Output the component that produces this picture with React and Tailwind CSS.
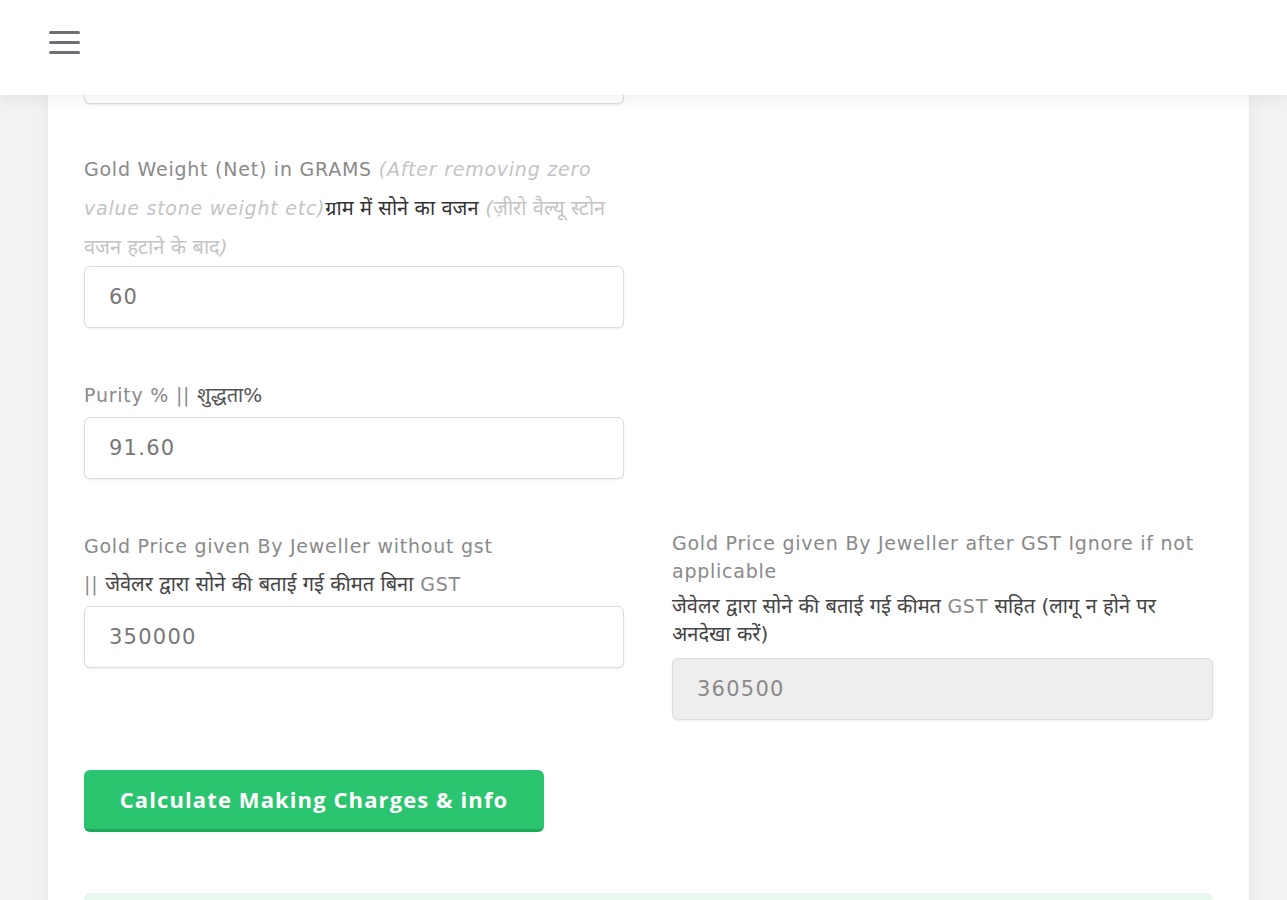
import React from 'react';

const font = { fontFamily: '"DejaVu Sans", "Noto Sans", "Noto Sans Devanagari", "Lohit Devanagari", sans-serif' };

const Field = ({ value, disabled }) => (
  <input
    className={
      disabled
        ? 'w-full h-[62px] px-6 border border-[#dcdcdc] rounded-md bg-[#eeeeee] text-[21px] text-[#8a8a8a] tracking-[0.06em] shadow-[0_1px_2px_rgba(0,0,0,0.08)] outline-none'
        : 'w-full h-[62px] px-6 border border-[#dcdcdc] rounded-md bg-white text-[21px] text-[#777] tracking-[0.06em] shadow-[0_1px_2px_rgba(0,0,0,0.08)] outline-none'
    }
    type="text"
    defaultValue={value}
    readOnly
    disabled={disabled}
  />
);

const App = () => {
  return (
    <div className="min-h-screen bg-[#f2f2f2] overflow-hidden" style={font}>
      {/* top bar */}
      <header className="relative z-10 h-[95px] bg-white flex items-start pt-[31px] pl-[49px] shadow-[0_6px_14px_rgba(0,0,0,0.05)]">
        <button className="flex flex-col gap-[7px]" aria-label="menu">
          <span className="block w-[31px] h-[3px] bg-[#6e6e76] rounded-sm"></span>
          <span className="block w-[31px] h-[3px] bg-[#6e6e76] rounded-sm"></span>
          <span className="block w-[31px] h-[3px] bg-[#6e6e76] rounded-sm"></span>
        </button>
      </header>

      <main className="ml-[48px] w-[1201px] bg-white min-h-[805px] px-[36px] shadow-[0_0_16px_rgba(0,0,0,0.06)]">
        {/* previous input, scrolled under the header */}
        <div className="w-[540px] h-[9px] border-x border-b border-[#dcdcdc] rounded-b-md shadow-[0_1px_2px_rgba(0,0,0,0.08)]"></div>

        <div className="grid grid-cols-[540px_541px] gap-x-[48px] pt-[46px]">
          <div className="flex flex-col">
            <label className="block text-[19px] leading-[39px] text-[#8a8a8a] tracking-[0.04em]">
              Gold Weight (Net) in GRAMS{' '}
              <i className="text-[#c4c4c4]">(After removing zero value stone weight etc)</i>
              <span className="text-[#333] text-[20px] tracking-normal">ग्राम में सोने का वजन</span>{' '}
              <i className="text-[#c4c4c4] text-[20px] tracking-normal">(ज़ीरो वैल्यू स्टोन वजन हटाने के बाद)</i>
            </label>
            <div className="mt-[-1px]">
              <Field value="60" />
            </div>

            <label className="block mt-[49px] text-[19px] leading-[36px] text-[#8a8a8a] tracking-[0.04em]">
              Purity % || <span className="text-[#555] text-[20px] tracking-normal">शुद्धता%</span>
            </label>
            <div className="mt-[4px]">
              <Field value="91.60" />
            </div>

            <label className="block mt-[52px] text-[19px] leading-[30px] text-[#8a8a8a] tracking-[0.04em]">
              Gold Price given By Jeweller without gst
            </label>
            <label className="block mt-[8px] text-[19px] leading-[30px] text-[#8a8a8a] tracking-[0.04em]">
              || <span className="text-[#444] text-[20px] tracking-normal">जेवेलर द्वारा सोने की बताई गई कीमत बिना</span> GST
            </label>
            <div className="mt-[7px]">
              <Field value="350000" />
            </div>
          </div>

          <div className="flex flex-col pt-[379px]">
            <label className="block text-[19px] leading-[28px] text-[#8a8a8a] tracking-[0.04em]">
              Gold Price given By Jeweller after GST Ignore if not applicable
            </label>
            <label className="block mt-[7px] text-[20px] leading-[28px] text-[#444]">
              जेवेलर द्वारा सोने की बताई गई कीमत <span className="text-[#8a8a8a] text-[19px] tracking-[0.04em]">GST</span> सहित (लागू न होने पर अनदेखा करें)
            </label>
            <div className="mt-[10px]">
              <Field value="360500" disabled />
            </div>
          </div>
        </div>

        <button
          className="mt-[50px] w-[460px] h-[62px] rounded-md bg-[#2cc56f] border-b-[3px] border-[#1fa85a] text-white text-[22px] font-bold tracking-[0.05em]"
          style={{ fontFamily: '"Open Sans", sans-serif' }}
          type="button"
        >
          Calculate Making Charges &amp; info
        </button>

        <div className="mt-[61px] h-[40px] rounded-md bg-[#e8f8ef]"></div>
      </main>
    </div>
  );
};

export default App;
